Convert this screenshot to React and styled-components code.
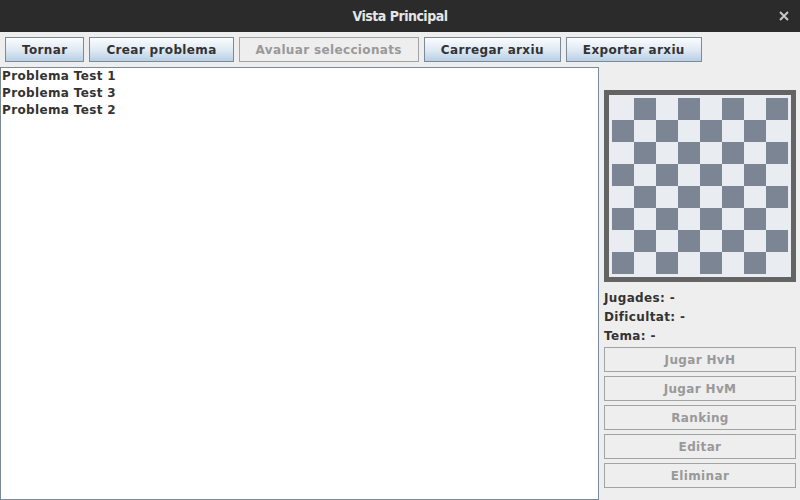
import styled, { createGlobalStyle } from 'styled-components';

const GlobalStyle = createGlobalStyle`
  html, body {
    margin: 0;
    padding: 0;
    background: #eeeeee;
  }
  * {
    box-sizing: border-box;
  }
`;

const problems = ['Problema Test 1', 'Problema Test 3', 'Problema Test 2'];
const info = ['Jugades: -', 'Dificultat: -', 'Tema: -'];
const actions = ['Jugar HvH', 'Jugar HvM', 'Ranking', 'Editar', 'Eliminar'];

export default function App() {
  return (
    <Window>
      <GlobalStyle />
      <TitleBar>
        <Title>Vista Principal</Title>
        <Close>
          <svg width='10' height='10' viewBox='0 0 10 10'>
            <path d='M1 1 L9 9 M9 1 L1 9' stroke='#c8c8c8' strokeWidth='2' />
          </svg>
        </Close>
      </TitleBar>
      <Toolbar>
        <ToolButton>Tornar</ToolButton>
        <ToolButton>Crear problema</ToolButton>
        <ToolButton disabled>Avaluar seleccionats</ToolButton>
        <ToolButton>Carregar arxiu</ToolButton>
        <ToolButton>Exportar arxiu</ToolButton>
      </Toolbar>
      <Body>
        <ProblemList>
          {problems.map((p) => (
            <Item key={p}>{p}</Item>
          ))}
        </ProblemList>
        <Side>
          <Board>
            {Array.from({ length: 64 }).map((_, i) => (
              <Square key={i} $dark={(Math.floor(i / 8) + i) % 2 === 1} />
            ))}
          </Board>
          <Info>
            {info.map((t) => (
              <Label key={t}>{t}</Label>
            ))}
          </Info>
          <Actions>
            {actions.map((a) => (
              <SideButton key={a} disabled>
                {a}
              </SideButton>
            ))}
          </Actions>
        </Side>
      </Body>
    </Window>
  );
}

const Window = styled.div`
  width: 800px;
  height: 500px;
  display: flex;
  flex-direction: column;
  background: #eeeeee;
  overflow: hidden;
  font-family: 'DejaVu Sans', sans-serif;
  letter-spacing: 0.35px;
`;

const TitleBar = styled.div`
  height: 32px;
  flex: none;
  background: #2b2b2b;
  display: flex;
  align-items: center;
  justify-content: center;
  position: relative;
`;

const Title = styled.div`
  font-family: 'DejaVu Sans Condensed', sans-serif;
  font-stretch: condensed;
  font-weight: bold;
  font-size: 14px;
  letter-spacing: -0.5px;
  color: #e6e6e6;
`;

const Close = styled.div`
  position: absolute;
  right: 11px;
  top: 11px;
  width: 10px;
  height: 10px;
  display: flex;
`;

const Toolbar = styled.div`
  flex: none;
  display: flex;
  gap: 5px;
  padding: 5px;
`;

const ToolButton = styled.button`
  height: 25px;
  padding: 0 16px;
  font-family: 'DejaVu Sans', sans-serif;
  font-weight: bold;
  font-size: 12px;
  letter-spacing: 0.35px;
  color: #333333;
  border: 1px solid #7a8a99;
  border-radius: 0;
  background: linear-gradient(#fbfcfd, #dde8f3 55%, #b8cfe5);

  &:disabled {
    color: #999999;
    border-color: #a3a3a3;
    background: #eeeeee;
  }
`;

const Body = styled.div`
  flex: 1;
  display: flex;
  min-height: 0;
`;

const ProblemList = styled.div`
  width: 599px;
  flex: none;
  background: #ffffff;
  border: 1px solid #7a8a99;
  padding: 0 1px;
`;

const Item = styled.div`
  font-weight: bold;
  font-size: 12px;
  line-height: 17px;
  color: #333333;
`;

const Side = styled.div`
  flex: 1;
  display: flex;
  flex-direction: column;
  padding: 23px 4px 0 5px;
`;

const Board = styled.div`
  width: 192px;
  height: 192px;
  border: 5px solid #646464;
  padding: 3px;
  background: #e9ecf0;
  display: grid;
  grid-template-columns: repeat(8, 22px);
  grid-template-rows: repeat(8, 22px);
`;

const Square = styled.div`
  background: ${(p) => (p.$dark ? '#7b8594' : '#e9ecf0')};
`;

const Info = styled.div`
  margin-top: 7px;
`;

const Label = styled.div`
  font-weight: bold;
  font-size: 12px;
  line-height: 19px;
  color: #333333;
`;

const Actions = styled.div`
  margin-top: 1px;
  display: flex;
  flex-direction: column;
  gap: 4px;
`;

const SideButton = styled.button`
  height: 25px;
  width: 192px;
  padding: 0;
  font-family: 'DejaVu Sans', sans-serif;
  font-weight: bold;
  font-size: 12px;
  letter-spacing: 0.35px;
  color: #999999;
  border: 1px solid #a3a3a3;
  border-radius: 0;
  background: #eeeeee;
`;
